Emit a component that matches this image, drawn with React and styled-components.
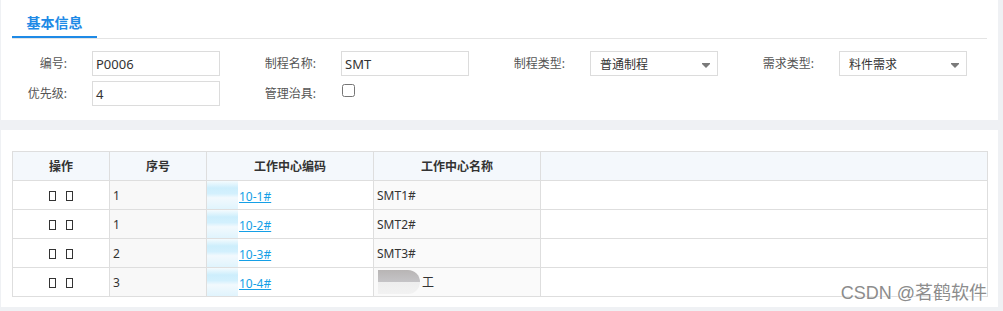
import React from "react";
import styled, { createGlobalStyle } from "styled-components";

const GlobalStyle = createGlobalStyle`
  body {
    margin: 0;
    background: #eff1f4;
    font-family: "Noto Sans", "Noto Sans CJK SC", sans-serif;
    color: #333;
  }
`;

const Page = styled.div`
  width: 1003px;
  height: 311px;
  overflow: hidden;
  background: #eff1f4;
`;

const Panel = styled.div`
  position: relative;
  margin-left: 1px;
  width: 997px;
  height: ${props => props.h}px;
  margin-bottom: ${props => props.gap || 0}px;
  background: #fff;
  box-sizing: border-box;
  padding: ${props => props.pt || 0}px 11px 0 11px;
`;

//=== 标签栏 ===//
const TabBar = styled.div`
  display: flex;
  width: 975px;
  height: 38px;
  border-bottom: 1px solid #e4e4e4;
`;

const Tab = styled.div`
  width: 85px;
  height: 38px;
  box-sizing: border-box;
  padding-top: 13px;
  line-height: 20px;
  text-align: center;
  font-size: 14px;
  font-weight: bold;
  color: #1e8ae6;
  border-bottom: 2px solid #1e8ae6;
`;

//=== 表单 ===//
const Form = styled.div`
  display: grid;
  grid-template-columns: repeat(4, 249px);
  grid-auto-rows: 25px;
  row-gap: 5px;
  margin-top: 12px;
`;

const Field = styled.div`
  display: flex;
  align-items: center;
`;

const Label = styled.div`
  width: 68px;
  box-sizing: border-box;
  padding-right: 13px;
  text-align: right;
  font-size: 12px;
  color: #555;
  margin-top: -2px;
  white-space: nowrap;
`;

const Input = styled.div`
  width: 128px;
  height: 25px;
  margin-left: 12px;
  box-sizing: border-box;
  border: 1px solid #dcdcdc;
  padding: 0 3px;
  line-height: 24px;
  font-size: 13px;
  color: #333;
`;

const Select = styled(Input)`
  display: flex;
  align-items: center;
  justify-content: space-between;
  padding: 3px 7px 0 9px;
  font-size: 12px;
`;

const Check = styled.input`
  width: 13px;
  height: 13px;
  margin: 0 0 0 13px;
  align-self: flex-start;
  margin-top: 3px;
`;

//=== 表格 ===//
const Table = styled.table`
  border-collapse: collapse;
  width: 976px;
  table-layout: fixed;
  font-size: 12px;
`;

const Th = styled.th`
  height: 28px;
  padding: 0;
  border: 1px solid #dedede;
  background: #f4f8fc;
  font-weight: bold;
  color: #333;
  text-align: center;
`;

const Td = styled.td`
  height: 28px;
  padding: 0 ${props => (props.pad === undefined ? 3 : props.pad)}px;
  border: 1px solid #dedede;
  background: ${props => props.bg || "#fff"};
  text-align: ${props => props.align || "left"};
  color: #333;
  white-space: nowrap;
`;

const Tofu = styled.span`
  display: inline-block;
  width: 5px;
  height: 8px;
  border: 1px solid #333;
  margin: 0 5px;
  vertical-align: -1px;
`;

const CodeCell = styled.div`
  display: flex;
  align-items: center;
  height: 28px;
`;

const Blur = styled.span`
  width: 31px;
  height: 28px;
  margin-right: 1px;
  background: linear-gradient(#f4fbfe 0%, #cdeefc 25%, #d3f0fd 45%, #f2f9fd 60%, #e0f4fd 100%);
`;

const NameCell = styled.div`
  display: flex;
  align-items: center;
  height: 28px;
`;

const GrayBlur = styled.span`
  width: 42px;
  height: 24px;
  margin-left: 1px;
  margin-right: 2px;
  border-radius: 0 12px 12px 0;
  background: linear-gradient(#b8b5b5 0%, #c5c4c7 50%, #eeeeee 50%, #f2f2f2 100%);
`;

const Link = styled.a`
  color: #159fe6;
  text-decoration: underline;
  padding-top: 2px;
`;

const Watermark = styled.div`
  position: absolute;
  right: 11px;
  bottom: 4px;
  font-family: "Liberation Sans", "Noto Sans CJK SC", sans-serif;
  font-size: 18px;
  line-height: 20px;
  color: #8c8c8c;
  text-shadow: 0 0 2px #fff, 0 0 2px #fff;
`;

const Arrow = () => (
  <svg width="8" height="5" viewBox="0 0 8 5">
    <path d="M0 0h8v1L4 5 0 1z" fill="#7a7a7a" />
  </svg>
);

const rows = [
  { no: "1", code: "10-1#", name: "SMT1#" },
  { no: "1", code: "10-2#", name: "SMT2#" },
  { no: "2", code: "10-3#", name: "SMT3#" },
  { no: "3", code: "10-4#", name: "工", hidden: true },
];

const App = () => {
  return (
    <Page>
      <GlobalStyle />
      <Panel h={120} gap={10}>
        <TabBar>
          <Tab>基本信息</Tab>
        </TabBar>
        <Form>
          <Field>
            <Label>编号:</Label>
            <Input>P0006</Input>
          </Field>
          <Field>
            <Label>制程名称:</Label>
            <Input>SMT</Input>
          </Field>
          <Field>
            <Label>制程类型:</Label>
            <Select>
              <span>普通制程</span>
              <Arrow />
            </Select>
          </Field>
          <Field>
            <Label>需求类型:</Label>
            <Select>
              <span>料件需求</span>
              <Arrow />
            </Select>
          </Field>
          <Field>
            <Label>优先级:</Label>
            <Input>4</Input>
          </Field>
          <Field>
            <Label>管理治具:</Label>
            <Check type="checkbox" />
          </Field>
        </Form>
      </Panel>
      <Panel h={177} pt={21}>
        <Table>
          <colgroup>
            <col style={{ width: 97 }} />
            <col style={{ width: 97 }} />
            <col style={{ width: 167 }} />
            <col style={{ width: 167 }} />
            <col />
          </colgroup>
          <thead>
            <tr>
              <Th>操作</Th>
              <Th>序号</Th>
              <Th>工作中心编码</Th>
              <Th>工作中心名称</Th>
              <Th></Th>
            </tr>
          </thead>
          <tbody>
            {rows.map((r, i) => (
              <tr key={i}>
                <Td align="center">
                  <Tofu />
                  <Tofu />
                </Td>
                <Td bg="#f8f8f8">{r.no}</Td>
                <Td pad={0}>
                  <CodeCell>
                    <Blur />
                    <Link href="#">{r.code}</Link>
                  </CodeCell>
                </Td>
                <Td bg="#fafafa">
                  <NameCell>
                    {r.hidden && <GrayBlur />}
                    {r.name}
                  </NameCell>
                </Td>
                <Td></Td>
              </tr>
            ))}
          </tbody>
        </Table>
        <Watermark>CSDN @茗鹤软件</Watermark>
      </Panel>
    </Page>
  );
};

export default App;
